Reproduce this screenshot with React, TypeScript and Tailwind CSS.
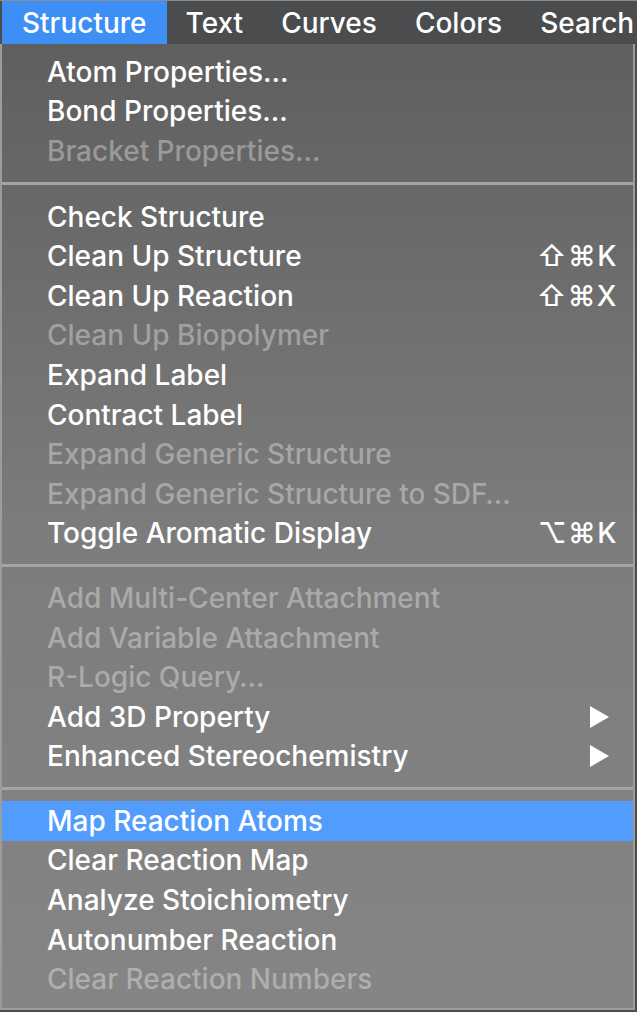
import { ReactNode } from "react";

type Item = {
  label: string;
  disabled?: boolean;
  shortcut?: string;
  submenu?: boolean;
  active?: boolean;
};

// menu sections, separated by rules
const sections: Item[][] = [
  [
    { label: "Atom Properties…" },
    { label: "Bond Properties…" },
    { label: "Bracket Properties…", disabled: true },
  ],
  [
    { label: "Check Structure" },
    { label: "Clean Up Structure", shortcut: "⇧⌘K" },
    { label: "Clean Up Reaction", shortcut: "⇧⌘X" },
    { label: "Clean Up Biopolymer", disabled: true },
    { label: "Expand Label" },
    { label: "Contract Label" },
    { label: "Expand Generic Structure", disabled: true },
    { label: "Expand Generic Structure to SDF…", disabled: true },
    { label: "Toggle Aromatic Display", shortcut: "⌥⌘K" },
  ],
  [
    { label: "Add Multi-Center Attachment", disabled: true },
    { label: "Add Variable Attachment", disabled: true },
    { label: "R-Logic Query…", disabled: true },
    { label: "Add 3D Property", submenu: true },
    { label: "Enhanced Stereochemistry", submenu: true },
  ],
  [
    { label: "Map Reaction Atoms", active: true },
    { label: "Clear Reaction Map" },
    { label: "Analyze Stoichiometry" },
    { label: "Autonumber Reaction" },
    { label: "Clear Reaction Numbers", disabled: true },
  ],
];

const menus = ["Structure", "Text", "Curves", "Colors", "Search"];

function Arrow() {
  return (
    <svg width="19" height="22" viewBox="0 0 19 22" className="mr-[9px]">
      <path d="M0 0 L19 11 L0 22 Z" fill="white" />
    </svg>
  );
}

function Row({ item }: { item: Item }) {
  let right: ReactNode = null;
  if (item.shortcut) right = <span className="tracking-[1.5px]">{item.shortcut}</span>;
  if (item.submenu) right = <Arrow />;

  return (
    <div
      className={
        "h-[39.6px] flex items-center justify-between pl-[45px] pr-[15px] " +
        (item.active ? "bg-[#529cfd] text-white" : item.disabled ? "text-white/35" : "text-white")
      }
    >
      <span>{item.label}</span>
      {right}
    </div>
  );
}

export default function App() {
  return (
    <div
      className="w-[637px] h-[1012px] bg-[#4b4c4e] text-[28px] overflow-hidden"
      style={{ fontFamily: 'Inter, "DejaVu Sans", sans-serif' }}
    >
      {/* menu bar */}
      <div className="h-[44px] flex items-center border-t border-[#8a8b8d] bg-[#4b4c4e] text-white font-medium">
        {menus.map((m, i) => (
          <div
            key={m}
            className={
              "h-full flex items-center whitespace-nowrap " +
              (i === 0 ? "bg-[#3d8ef5] ml-[2px] px-[20px]" : i === menus.length - 1 ? "pl-[19px]" : "px-[19px]")
            }
          >
            {m}
          </div>
        ))}
      </div>

      {/* dropdown */}
      <div className="w-[635px] h-[966px] border-x-2 border-b-2 border-[#9c9c9c] bg-gradient-to-b from-[#5f5f5f] via-[#7c7c7c] to-[#858585] pt-[8px] font-medium">
        {sections.map((sec, i) => (
          <div key={i}>
            {i > 0 && (
              <div className={(i === 1 ? "h-[26px]" : "h-[25px]") + " flex items-center"}>
                <div className="w-full h-[3px] bg-[#a4a4a4]" />
              </div>
            )}
            {sec.map((item) => (
              <Row key={item.label} item={item} />
            ))}
          </div>
        ))}
      </div>
    </div>
  );
}
